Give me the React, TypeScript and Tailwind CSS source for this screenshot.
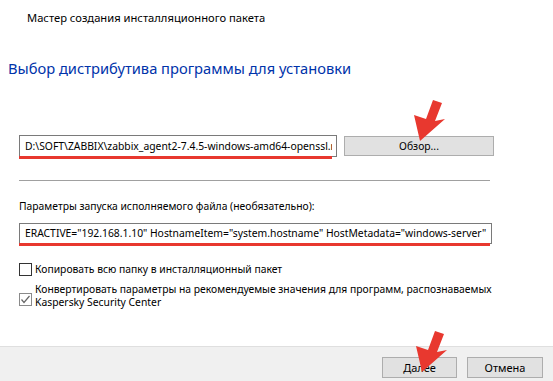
import React from "react";

const font = { fontFamily: '"Noto Sans", "Open Sans", sans-serif' };

function Arrow({ className }: { className: string }) {
  return (
    <svg className={className} width="36" height="46" viewBox="0 0 36 46">
      <polygon
        points="8,44 2,18 14,22 21,3 30,6 23,24 33,22"
        fill="#e8382f"
      />
    </svg>
  );
}

export default function App() {
  return (
    <div
      className="relative w-[553px] h-[381px] bg-white flex flex-col text-black overflow-hidden text-[10.35px]"
      style={font}
    >
      <div className="pt-[10px] pl-[27px] text-[11.2px] leading-[16px]">
        Мастер создания инсталляционного пакета
      </div>
      <div className="mt-[32px] pl-[8px] text-[14.7px] leading-[20px] text-[#0033aa]">
        Выбор дистрибутива программы для установки
      </div>

      <div className="mt-[57px] pl-[19px] flex items-start">
        <div className="flex flex-col">
          <div className="w-[318px] h-[22px] border border-[#7a7a7a] bg-white pl-[5px] leading-[20px]">
            <div className="w-[307px] overflow-hidden whitespace-nowrap">
              D:\SOFT\ZABBIX\zabbix_agent2-7.4.5-windows-amd64-openssl.msi
            </div>
          </div>
          <div className="w-[313px] h-[3px] bg-[#e8382f] -mt-[1px]" />
        </div>
        <div className="ml-[7px] mt-[1px] w-[150px] h-[20px] border border-[#adadad] bg-[#e1e1e1] leading-[18px] text-center">
          Обзор...
        </div>
      </div>

      <div className="mt-[21px] ml-[19px] w-[471px] h-[1px] bg-[#a0a0a0]" />

      <div className="mt-[17px] pl-[19px] leading-[16px]">
        Параметры запуска исполняемого файла (необязательно):
      </div>

      <div className="mt-[9px] pl-[19px] flex flex-col">
        <div className="w-[473px] h-[21px] border border-[#7a7a7a] bg-white overflow-hidden whitespace-nowrap pl-[5px] leading-[19px]">
          ERACTIVE="192.168.1.10" HostnameItem="system.hostname" HostMetadata="windows-server"
        </div>
        <div className="w-[471px] h-[3px] bg-[#e8382f] -mt-[1px]" />
      </div>

      <div className="mt-[15px] pl-[19px] flex items-center">
        <div className="w-[13px] h-[13px] border border-[#333333] bg-white" />
        <span className="ml-[3px] leading-[16px]">
          Копировать всю папку в инсталляционный пакет
        </span>
      </div>

      <div className="mt-[6px] pl-[19px] flex items-start">
        <div className="mt-[10px] w-[13px] h-[13px] border border-[#8a8a8a] bg-white flex items-center justify-center">
          <svg width="11" height="11" viewBox="0 0 11 11">
            <polyline points="1.5,5.5 4,8.5 9.5,2" fill="none" stroke="#666" strokeWidth="1.2" />
          </svg>
        </div>
        <span className="ml-[3px] leading-[13px] whitespace-nowrap">
          Конвертировать параметры на рекомендуемые значения для программ, распознаваемых
          <br />
          Kaspersky Security Center
        </span>
      </div>

      <div className="mt-auto h-[35px] bg-[#f0f0f0] border-t border-[#dfdfdf] flex items-start justify-end pr-[10px] pt-[10px] gap-[10px]">
        <div className="w-[75px] h-[21px] border border-[#adadad] bg-[#e1e1e1] text-[11px] leading-[19px] text-center">
          Далее
        </div>
        <div className="w-[76px] h-[21px] border border-[#adadad] bg-[#e1e1e1] text-[11px] leading-[19px] text-center">
          Отмена
        </div>
      </div>

      <Arrow className="absolute left-[412px] top-[97px]" />
      <Arrow className="absolute left-[414px] top-[328px]" />
    </div>
  );
}
